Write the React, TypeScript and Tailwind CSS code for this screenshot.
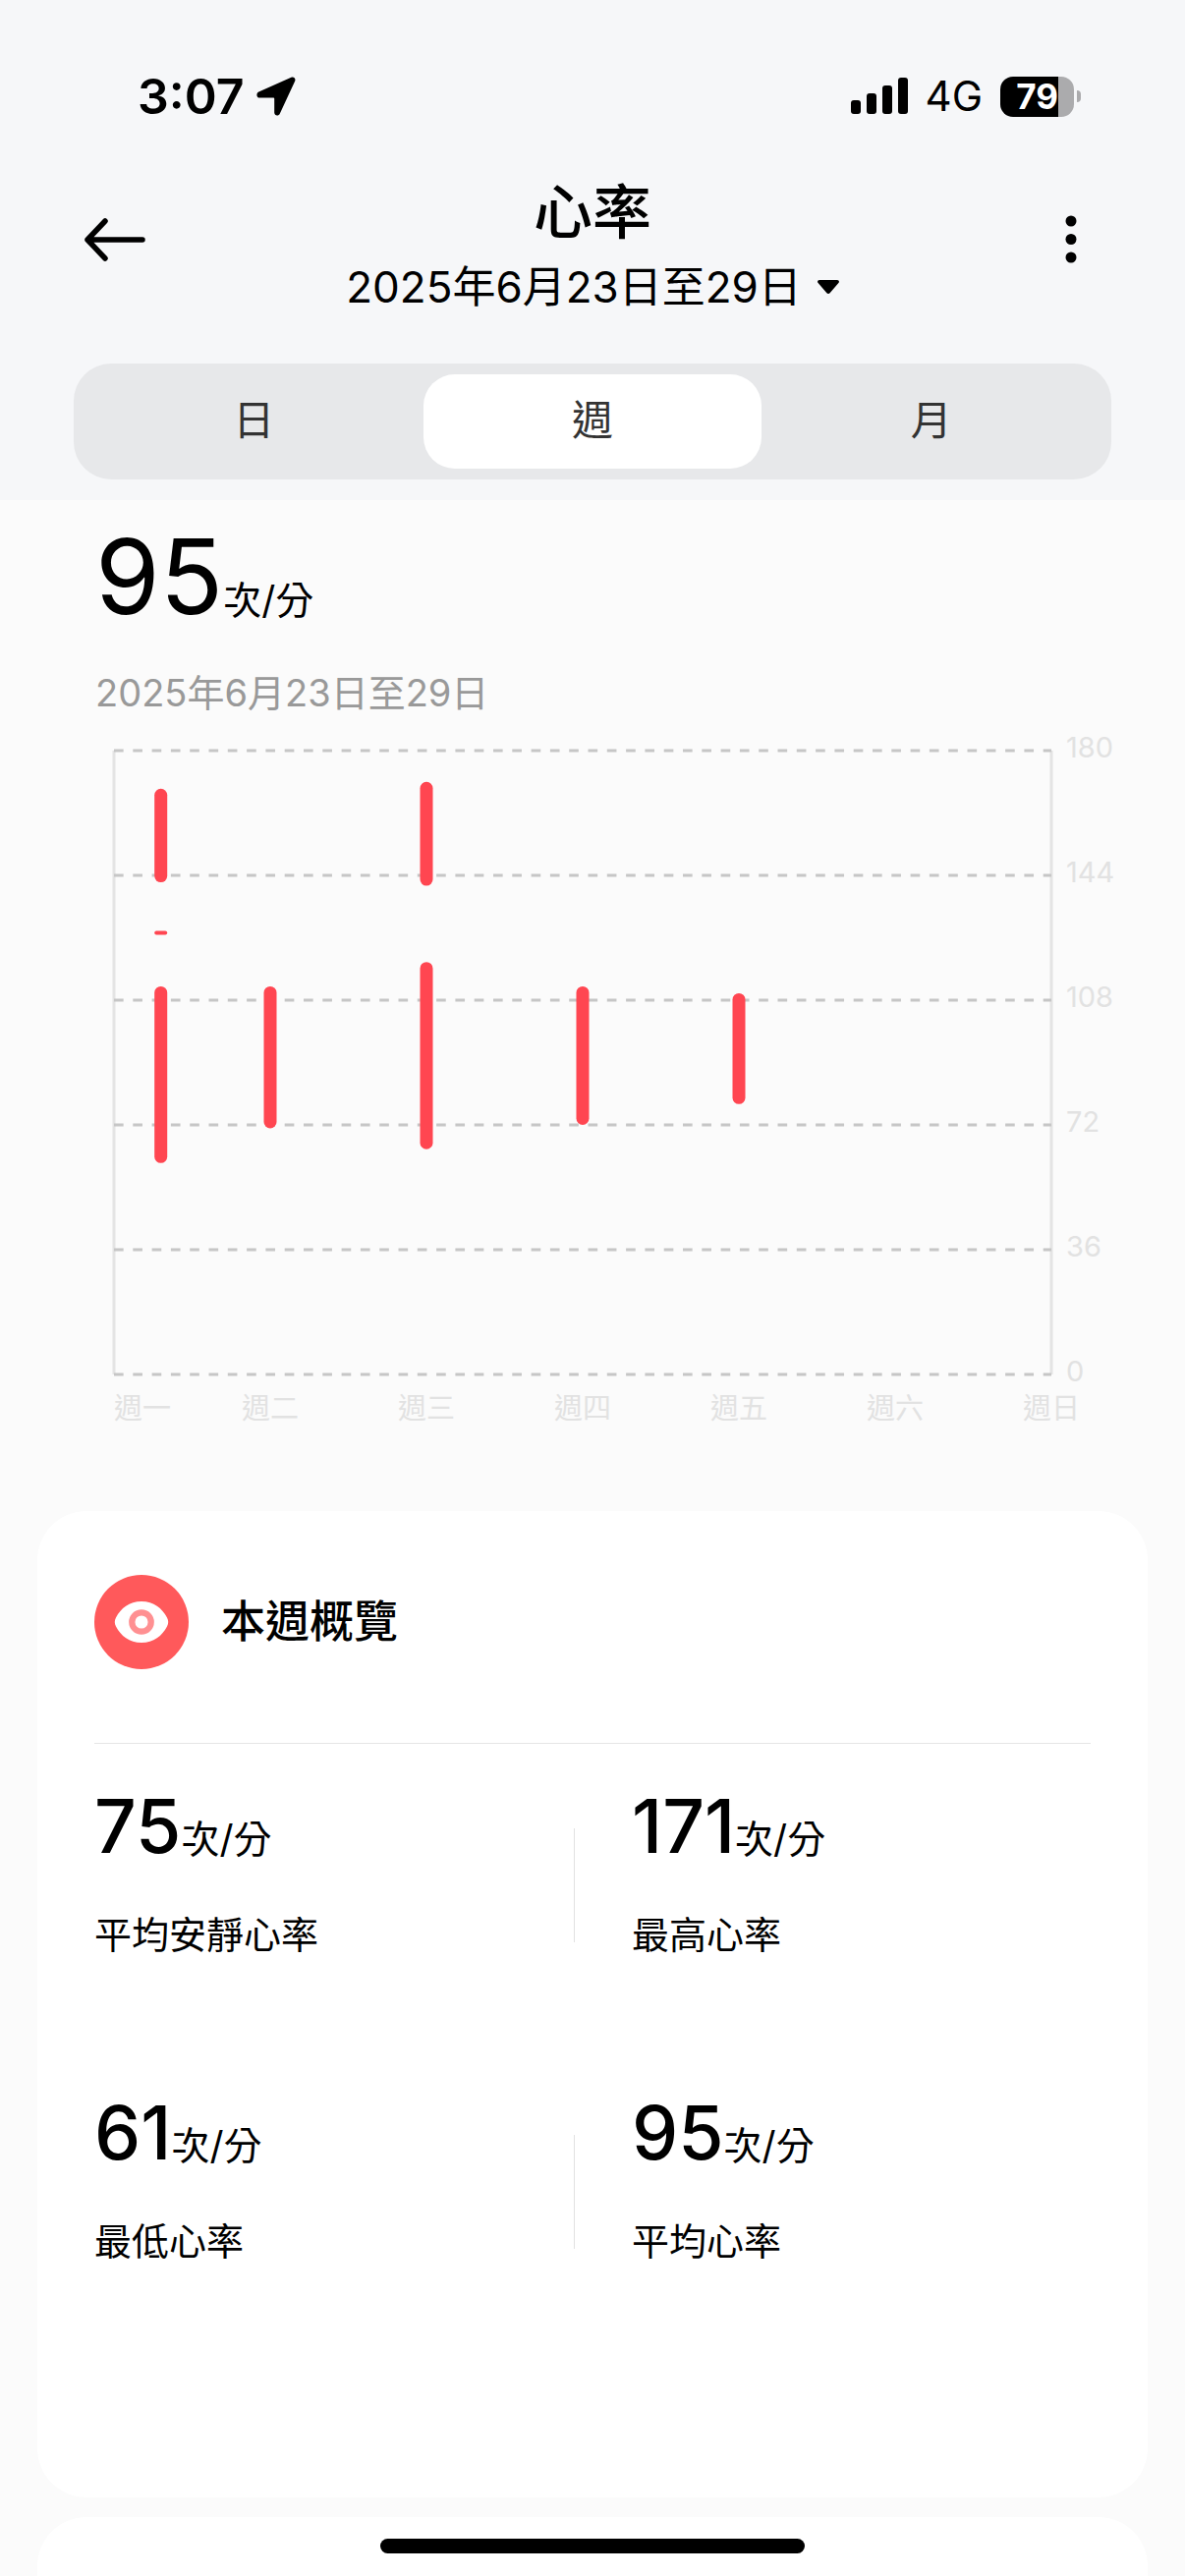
import React, { useState } from 'react';

interface HeartRange {
  day: number;
  min: number;
  max: number;
}

interface Stat {
  label: string;
  value: number;
}

const UNIT = '次/分';
const WEEK_LABEL = '2025年6月23日至29日';

const PERIODS = ['日', '週', '月'];
const WEEKDAYS = ['週一', '週二', '週三', '週四', '週五', '週六', '週日'];
const Y_TICKS = [180, 144, 108, 72, 36, 0];

const RANGES: HeartRange[] = [
  { day: 0, min: 142, max: 169 },
  { day: 0, min: 127, max: 128 },
  { day: 0, min: 61, max: 112 },
  { day: 1, min: 71, max: 112 },
  { day: 2, min: 141, max: 171 },
  { day: 2, min: 65, max: 119 },
  { day: 3, min: 72, max: 112 },
  { day: 4, min: 78, max: 110 },
];

const STATS: Stat[] = [
  { label: '平均安靜心率', value: 75 },
  { label: '最高心率', value: 171 },
  { label: '最低心率', value: 61 },
  { label: '平均心率', value: 95 },
];

// Chart geometry, in viewBox units
const CHART = { left: 116, right: 1070, top: 24, bottom: 659, barWidth: 13 };

function StatusBar() {
  return (
    <div className="flex h-14 items-center justify-between pl-[140px] pr-[106px]">
      <div className="flex items-center gap-3">
        <span className="text-[50px] leading-[56px] font-semibold">3:07</span>
        <svg className="h-10 w-10" viewBox="0 0 40 40" fill="currentColor">
          <path d="M35.4.8 2.3 15.6C-.6 17-.1 21.6 3.2 21.6H17.400c.5 0 .8.3.8.8V36.500c0 3.400 4.300 4.200 5.700 1L39.200 4.600C40.300 2.100 37.900-.3 35.400.8Z" />
        </svg>
      </div>
      <div className="flex items-center gap-[18px]">
        <svg className="h-[38px] w-[58px]" viewBox="0 0 58 38" fill="currentColor">
          <rect x="0" y="23" width="10" height="14" rx="3" />
          <rect x="16" y="16" width="10" height="21" rx="3" />
          <rect x="32" y="8" width="10" height="29" rx="3" />
          <rect x="48" y="0" width="10" height="37" rx="3" />
        </svg>
        <span className="text-[42px] leading-[56px]">4G</span>
        <div className="flex items-center gap-[3px]">
          <div className="flex h-[41px] w-[75px] items-center justify-center overflow-hidden rounded-[13px] bg-[linear-gradient(to_right,#000_79%,#ababad_79%)] text-[35px] leading-[41px] font-bold text-white">
            79
          </div>
          <div className="h-3 w-1 rounded-r-full bg-[#ababad]" />
        </div>
      </div>
    </div>
  );
}

function TitleBar() {
  return (
    <div className="flex items-center justify-between px-[86px] pt-[54px]">
      <button type="button" aria-label="返回" className="w-[62px] pb-1.5">
        <svg
          className="h-11 w-[62px]"
          viewBox="0 0 62 44"
          fill="none"
          stroke="currentColor"
          strokeWidth="5.500"
          strokeLinecap="round"
          strokeLinejoin="round"
        >
          <path d="M59 22H3M21 3 3 22l18 19" />
        </svg>
      </button>

      <div className="flex flex-col items-center gap-[18px]">
        <h1 className="text-[60px] leading-[72px] font-medium">心率</h1>
        <button type="button" className="flex items-center gap-4 text-[44px] leading-[44px]">
          {WEEK_LABEL}
          <svg className="h-[14px] w-[22px]" viewBox="0 0 22 14" fill="currentColor">
            <path d="M2 0h18c1.800 0 2.500 1.700 1.400 3l-8.600 10c-1 1.200-2.600 1.200-3.600 0L.6 3C-.5 1.700.2 0 2 0Z" />
          </svg>
        </button>
      </div>

      <button type="button" aria-label="更多" className="flex w-[62px] justify-end pb-1.5">
        <svg className="h-[50px] w-9" viewBox="0 0 36 50" fill="currentColor">
          <circle cx="6" cy="6" r="5.500" />
          <circle cx="6" cy="24.500" r="5.500" />
          <circle cx="6" cy="43" r="5.500" />
        </svg>
      </button>
    </div>
  );
}

function PeriodTabs() {
  const [active, setActive] = useState('週');

  return (
    <div role="tablist" className="mx-[75px] mt-14 flex rounded-[38px] bg-[#e7e8ea] p-[11px]">
      {PERIODS.map((period) => (
        <button
          key={period}
          type="button"
          role="tab"
          aria-selected={period === active}
          onClick={() => setActive(period)}
          className={`h-24 flex-1 rounded-[32px] pb-1 text-[42px] text-[#333] ${period === active ? 'bg-white' : ''}`}
        >
          {period}
        </button>
      ))}
    </div>
  );
}

function HeartRateChart() {
  const { left, right, top, bottom, barWidth } = CHART;
  const step = (right - left) / (WEEKDAYS.length - 1);
  const yOf = (value: number) => bottom - (value / 180) * (bottom - top);
  // Monday's bar is pushed in so that it clears the left axis
  const barX = (day: number) => (day === 0 ? left + step * 0.3 : left + step * day);

  return (
    <svg className="block w-full" viewBox="0 0 1206 720" role="img" aria-label="每日心率範圍">
      <g stroke="#e4e4e4" strokeWidth="3">
        <line x1={left} x2={left} y1={top} y2={bottom} />
        <line x1={right} x2={right} y1={top} y2={bottom} />
      </g>
      {Y_TICKS.map((tick) => (
        <g key={tick}>
          <line
            x1={left}
            x2={right}
            y1={yOf(tick)}
            y2={yOf(tick)}
            stroke="#c6c6c6"
            strokeWidth="3"
            strokeDasharray="9.65 9.65"
          />
          <text x="1085" y={yOf(tick) + 7} fontSize="29" fill="#e2e2e2">
            {tick}
          </text>
        </g>
      ))}
      {WEEKDAYS.map((day, i) => (
        <text
          key={day}
          x={left + step * i}
          y="704"
          fontSize="29"
          fill="#e2e2e2"
          textAnchor={i === 0 ? 'start' : 'middle'}
        >
          {day}
        </text>
      ))}
      {RANGES.map(({ day, min, max }) => {
        const height = Math.max(yOf(min) - yOf(max), 4);
        return (
          <rect
            key={`${day}-${min}`}
            x={barX(day) - barWidth / 2}
            y={yOf(max)}
            width={barWidth}
            height={height}
            rx={Math.min(barWidth, height) / 2}
            fill="#ff4651"
          />
        );
      })}
    </svg>
  );
}

function EyeBadge() {
  return (
    <svg className="size-24" viewBox="0 0 96 96">
      <circle cx="48" cy="48" r="48" fill="#ff595b" />
      <path
        d="M48 27c-12.500 0-21 7-26 16.500-1.600 3-1.600 6 0 9C27 62 35.500 69 48 69s21-7 26-16.500c1.600-3 1.600-6 0-9C69 34 60.500 27 48 27Z"
        fill="#fff"
      />
      <circle cx="48" cy="48" r="9.700" fill="none" stroke="#ff9092" strokeWidth="6.300" />
    </svg>
  );
}

function StatCell({ label, value }: Stat) {
  return (
    <div>
      <p className="flex items-baseline">
        <span className="text-[75px] leading-[92px] font-medium">{value}</span>
        <span className="text-[39px]">{UNIT}</span>
      </p>
      <p className="mt-9 text-[38px] leading-[56px]">{label}</p>
    </div>
  );
}

export default function App() {
  return (
    <div
      lang="zh-Hant"
      className="flex min-h-screen flex-col bg-[#fbfbfb] font-['Inter','Noto_Sans_CJK_TC',sans-serif] text-black"
    >
      {/* Header */}
      <header className="bg-[#f6f7f9] pt-[70px] pb-[21px]">
        <StatusBar />
        <TitleBar />
        <PeriodTabs />
      </header>

      <main className="flex flex-1 flex-col">
        {/* Weekly average */}
        <section>
          <div className="px-[97px] pt-[30px]">
            <p className="flex items-baseline">
              <span className="text-[106px] leading-[96px]">95</span>
              <span className="text-[39px]">{UNIT}</span>
            </p>
            <p className="mt-9 text-[38px] leading-[56px] text-[#999]">{WEEK_LABEL}</p>
          </div>
          <div className="mt-[7px]">
            <HeartRateChart />
          </div>
        </section>

        {/* Overview card */}
        <section className="mx-[38px] mt-[78px] rounded-[50px] bg-white px-[58px] pt-[65px] pb-[233px]">
          <div className="flex items-center gap-[33px] border-b border-[#e6e6e6] pb-[75px]">
            <EyeBadge />
            <h2 className="text-[45px] leading-[56px] font-medium">本週概覽</h2>
          </div>
          <div className="mt-[38px] grid grid-cols-2 gap-y-32">
            {STATS.map((stat, i) =>
              i % 2 === 0 ? (
                <div key={stat.label} className="flex items-end justify-between pr-[18px]">
                  <StatCell {...stat} />
                  <div className="mb-5 h-[116px] w-px bg-[#e2e2e2]" />
                </div>
              ) : (
                <div key={stat.label} className="pl-10">
                  <StatCell {...stat} />
                </div>
              )
            )}
          </div>
        </section>

        {/* Top of the next card, with the home indicator over it */}
        <section className="mx-[38px] mt-5 flex flex-1 justify-center rounded-t-[50px] bg-white pt-[22px] pb-6">
          <div className="h-[15px] w-[432px] rounded-full bg-black" />
        </section>
      </main>
    </div>
  );
}
